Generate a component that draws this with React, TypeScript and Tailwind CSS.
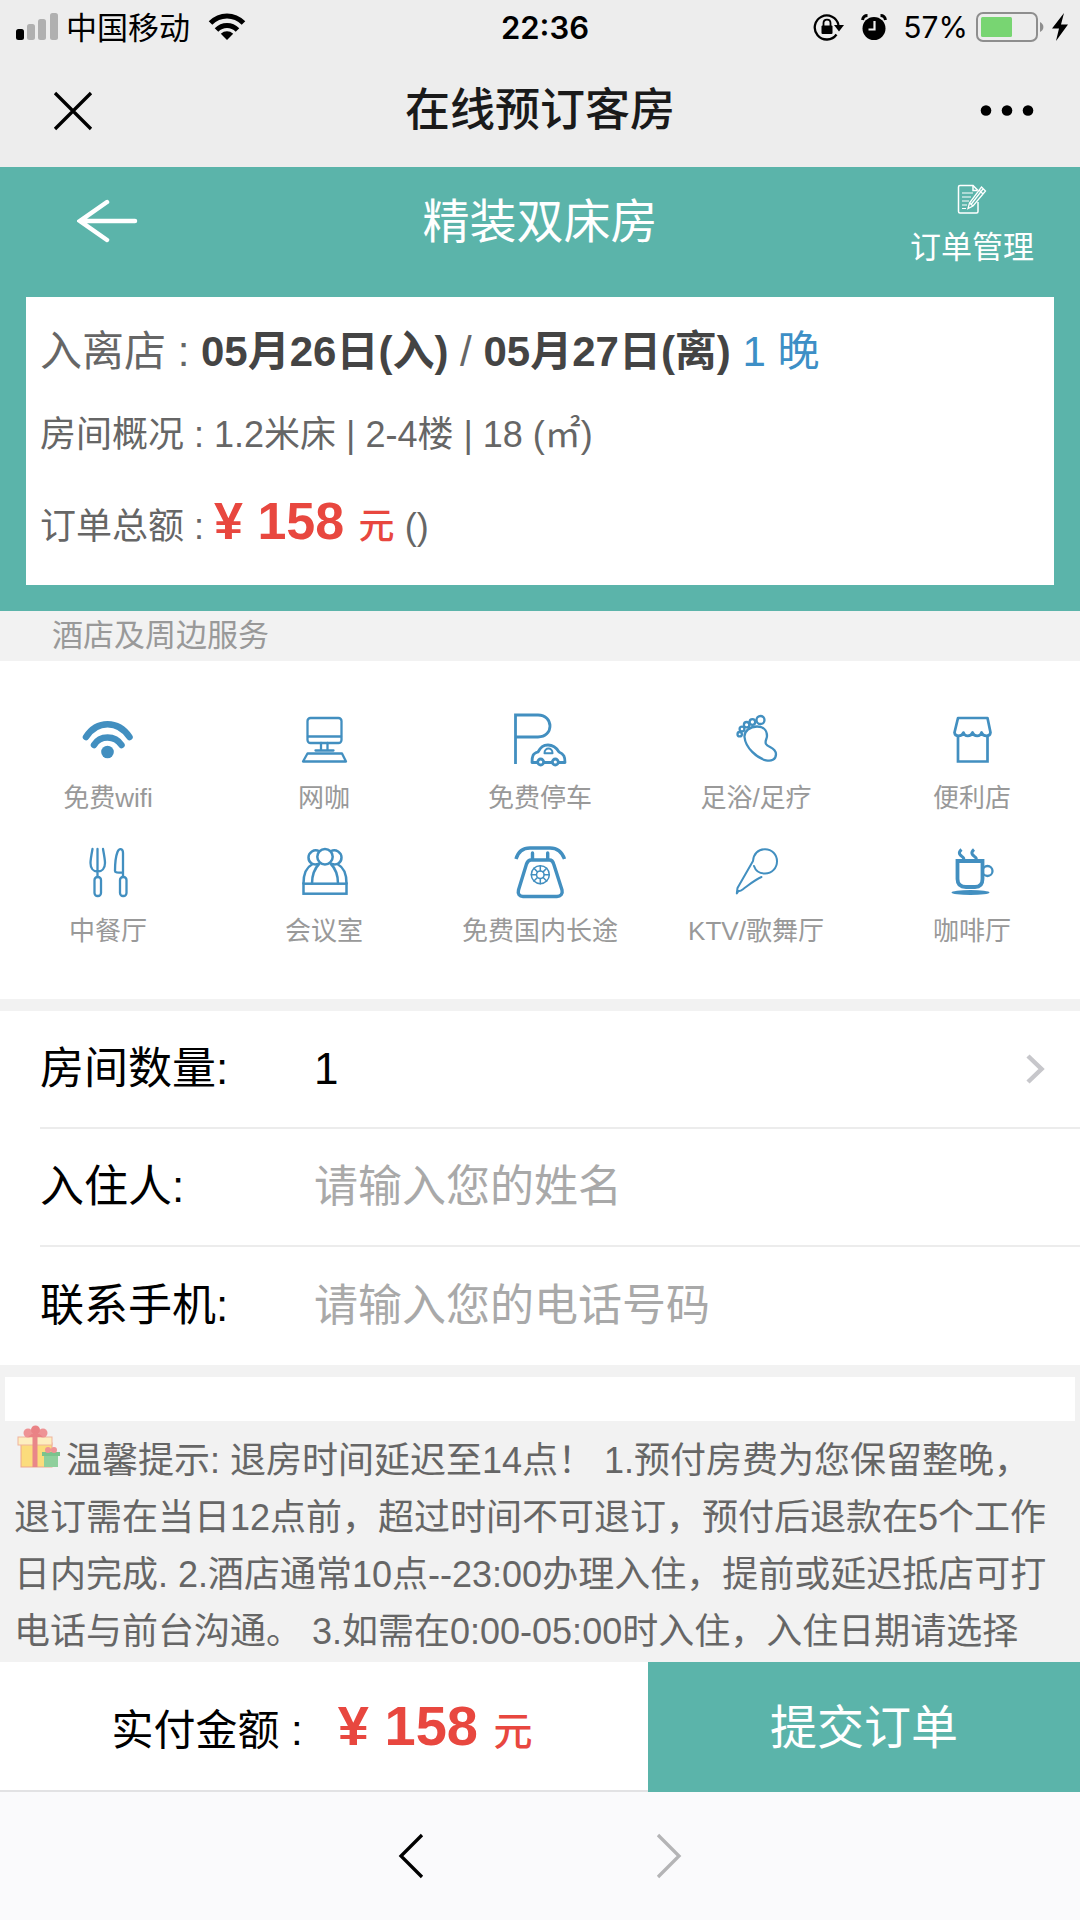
import React from "react";

const rooms = [1, 2, 3, 4, 5];

type IconProps = { children: React.ReactNode; width?: number };

function ServiceIcon({ children, width = 2.3 }: IconProps) {
  return (
    <svg
      viewBox="0 0 60 60"
      className="size-15"
      fill="none"
      stroke="#428fc0"
      strokeWidth={width}
      strokeLinecap="round"
      strokeLinejoin="round"
      aria-hidden="true"
    >
      {children}
    </svg>
  );
}

const dialAngles = [0, 45, 90, 135, 180, 225, 270, 315];

const services = [
  {
    label: "免费wifi",
    icon: (
      <ServiceIcon width={6.5}>
        <path d="M8 28C19 11 40 11 51.5 28" />
        <path d="M16 36C22 26 37 26 43.5 36" />
        <circle cx="29.5" cy="43" r="6.3" fill="#428fc0" stroke="none" />
      </ServiceIcon>
    ),
  },
  {
    label: "网咖",
    icon: (
      <ServiceIcon>
        <rect x="13.500" y="9" width="34" height="25" rx="3" />
        <path d="M14 27.5H47M27 34V41M33.5 34V41M21.5 41.5H39.5" />
        <path d="M13.5 44.5H48L52 52.5H9Z" />
      </ServiceIcon>
    ),
  },
  {
    label: "免费停车",
    icon: (
      <ServiceIcon width={2.8}>
        <path d="M5.5 55V6H28C44 6 44 28 28 28H5.5" strokeLinecap="butt" strokeLinejoin="miter" />
        <path d="M27.5 53.5H22C22 47 23 44 28 43C31 38 33 36 38 36C43 36 46 38 49 43C54 45 55 48 55 53.5H48.5M34 53.5H42" />
        <circle cx="30.7" cy="53" r="3" />
        <circle cx="45.3" cy="53" r="3" />
        <path d="M34.5 44.2C34.5 38 42.5 38 42.5 44.2Z" strokeWidth="2" />
      </ServiceIcon>
    ),
  },
  {
    label: "足浴/足疗",
    icon: (
      <ServiceIcon>
        <path d="M18.5 28C18 22 24 17.5 31 17.5C37 17.5 41 21 41 27C41 30 38.5 32 40 35C42 38.5 49.5 38.5 50 45C50 51 45 52.5 40 51.3C31 49 19.5 39 18.5 28Z" />
        <circle cx="34.5" cy="11" r="4" />
        <circle cx="26.4" cy="13" r="2.8" />
        <circle cx="20.6" cy="15.7" r="2.7" />
        <circle cx="16" cy="20" r="2.4" />
        <circle cx="13.7" cy="25.2" r="2.2" />
      </ServiceIcon>
    ),
  },
  {
    label: "便利店",
    icon: (
      <ServiceIcon width={2.7}>
        <path d="M16 9H45.5L48.5 23.5C48 28 41 28 39.5 23.5C38.5 28 32 28 30.5 23.5C29 28 22.5 28 21.5 23.5C20 28 13 28 12.5 23.5Z" />
        <path d="M16 27V52.5H45.5V27" strokeLinejoin="miter" />
      </ServiceIcon>
    ),
  },
  {
    label: "中餐厅",
    icon: (
      <ServiceIcon>
        <path d="M14.5 7C13 15 12.5 18 12.5 21C12.5 26 15 29.5 19.5 29.5C24 29.5 27 26 27 21C27 18 26.5 15 25 7M19.5 7V35" />
        <rect x="16.5" y="35" width="6.5" height="19" rx="3" />
        <path d="M45 35V11C45 6 41 6 39.5 10C37.5 15 37 20 37 29C37 30.5 39 30.7 45 30.7" />
        <rect x="42" y="35" width="6.5" height="19" rx="3" />
      </ServiceIcon>
    ),
  },
  {
    label: "会议室",
    icon: (
      <ServiceIcon width={2.5}>
        <circle cx="31" cy="14.7" r="7.7" />
        <path d="M25 9C20 6.5 14.5 10.5 14.5 15.5C14.5 20.5 19 23.5 24 22M37 9C42 6.5 47.5 10.5 47.5 15.5C47.5 20.5 43 23.5 38 22" />
        <path d="M9.5 41.5C9.5 33 12 25.5 18 22.5M52.5 41.5C52.5 33 50 25.5 44 22.5M18 41.5C18 33 21 26 25.5 21.5M44 41.5C44 33 41 26 36.5 21.5" />
        <rect x="9.5" y="41.7" width="43" height="10" strokeLinejoin="miter" />
      </ServiceIcon>
    ),
  },
  {
    label: "免费国内长途",
    icon: (
      <ServiceIcon width={3.4}>
        <path d="M6 17C8 10 13 6 20 6H40C47 6 52 10 54.5 17" strokeLinecap="butt" />
        <path d="M22.5 11V17M37.7 11V17" />
        <path d="M21 18H39.5C42 18 43 19.5 43.7 22L52 48C53 52 50.5 54.5 47 54.5H13C9.5 54.5 7.5 52 8.5 48L16.5 22C17.5 19.5 18.5 18 21 18Z" />
        <g strokeWidth="1.5">
          <circle cx="30.3" cy="32.7" r="9" />
          <circle cx="30.3" cy="32.7" r="3.8" />
          {dialAngles.map((a) => (
            <path key={a} d="M30.3 28.7V23.7" transform={`rotate(${a} 30.3 32.7)`} />
          ))}
        </g>
      </ServiceIcon>
    ),
  },
  {
    label: "KTV/歌舞厅",
    icon: (
      <ServiceIcon width={2}>
        <path d="M28 24C29.5 28.5 33.5 31.5 39 31.5C46 31.5 51 26 51 19.3C51 12.5 46 7.2 39 7.2C32 7.2 27.5 12 27 19L11.5 46L10.8 51.5L12.5 49C14 49.5 16 48 17 47.2C24 42 30 37 35.5 35" />
      </ServiceIcon>
    ),
  },
  {
    label: "咖啡厅",
    icon: (
      <ServiceIcon width={3.8}>
        <path d="M19.5 7.5C15.5 11 18 13 20 14.5C21.5 15.5 22 17 21.5 18M32 7.5C28 11 30.5 13 32.5 14.5C34 15.5 34.5 17 34 18" strokeLinecap="butt" strokeWidth="3" />
        <path d="M15.5 19H40.5V37C40.5 42.5 38 45 33 45H24C18 45 15.5 42 15.5 37Z" strokeLinejoin="miter" />
        <circle cx="45.5" cy="29" r="5" strokeWidth="2.3" />
        <ellipse cx="28.5" cy="50.5" rx="19" ry="2.5" fill="#428fc0" stroke="none" />
      </ServiceIcon>
    ),
  },
];

function StatusBar() {
  return (
    <div className="grid h-[54px] grid-cols-3 items-center px-4 font-[Inter,'Noto_Sans_CJK_SC',sans-serif] text-black">
      <div className="flex items-center gap-2 text-[31px] leading-none">
        <svg viewBox="0 0 42 28" className="h-7 w-[42px]" aria-hidden="true">
          <rect x="0" y="16" width="8" height="11" rx="2.5" />
          <rect x="11" y="11" width="8" height="16" rx="2.5" fill="#b0b0b0" />
          <rect x="22" y="6" width="8" height="21" rx="2.5" fill="#b0b0b0" />
          <rect x="34" y="0" width="8" height="27" rx="2.5" fill="#b0b0b0" />
        </svg>
        <span>中国移动</span>
        <svg viewBox="0 0 38 28" className="ml-2.5 h-7 w-[38px]" fill="none" stroke="#000" strokeWidth="5" aria-hidden="true">
          <path d="M2.5 10C12 0.5 26 0.5 35.5 10" />
          <path d="M8.5 17C14.5 11 23.5 11 29.5 17" />
          <path d="M19 27L12.8 20.8C16.5 17.5 21.5 17.5 25.2 20.8Z" fill="#000" stroke="none" />
        </svg>
      </div>
      <div className="pl-2.5 text-center text-[31px] leading-none font-semibold">22:36</div>
      <div className="-mr-1 flex items-center justify-end gap-2 text-[30px] leading-none">
        <svg viewBox="0 0 32 28" className="mr-2 h-7 w-8" aria-hidden="true">
          <path d="M25.5 12A12 12 0 1 0 23.5 21.5" fill="none" stroke="#000" strokeWidth="2.3" />
          <path d="M21 12H31L26 18.5Z" />
          <rect x="8.500" y="12.5" width="11" height="8.500" rx="1" />
          <path d="M10.5 13V10C10.5 5.500 17.5 5.500 17.5 10V13" fill="none" stroke="#000" strokeWidth="1.800" />
        </svg>
        <svg viewBox="0 0 26 28" className="mr-2 h-7 w-[26px]" aria-hidden="true">
          <circle cx="13" cy="15.5" r="11.5" />
          <path d="M1.500 7C2 4 4 2.500 6.500 2.500M24.500 7C24 4 22 2.500 19.500 2.500" stroke="#000" strokeWidth="3" fill="none" />
          <path d="M13.5 8V16.5H7.5" stroke="#ededed" strokeWidth="2.2" fill="none" />
        </svg>
        <span>57%</span>
        <svg viewBox="0 0 68 30" className="h-[30px] w-[68px]" aria-hidden="true">
          <rect x="1" y="1" width="60" height="28" rx="6" fill="none" stroke="#8e8e8e" strokeWidth="2" />
          <rect x="5" y="5" width="31" height="20" rx="1.5" fill="#78d572" />
          <path d="M64 10C68.5 12 68.5 18 64 20Z" fill="#8e8e8e" />
        </svg>
        <svg viewBox="0 0 16 28" className="h-7 w-4" aria-hidden="true">
          <path d="M12 0L0 15.5H7L4 28L16 11.5H9Z" />
        </svg>
      </div>
    </div>
  );
}

function FormRow({ id, label, children, last }: { id: string; label: string; children: React.ReactNode; last?: boolean }) {
  return (
    <div className={last ? "flex h-[118px] items-center" : "flex h-[118px] items-center border-b-2 border-[#ececec]"}>
      <label htmlFor={id} className="w-[274px] shrink-0 text-[44px] leading-none text-black">
        {label}
      </label>
      {children}
    </div>
  );
}

export default function App() {
  return (
    <div className="flex min-h-screen flex-col bg-[#f2f2f2] font-['Liberation_Sans','Noto_Sans_CJK_SC',sans-serif]">
      <header className="bg-[#ededed]">
        <StatusBar />
        <div className="flex h-[113px] items-center justify-between px-[45px]">
          <button type="button" aria-label="关闭" className="w-14 pl-2">
            <svg viewBox="0 0 40 40" className="size-10" stroke="#000" strokeWidth="3.3" aria-hidden="true">
              <path d="M2 2L38 38M38 2L2 38" />
            </svg>
          </button>
          <h1 className="text-[45px] leading-none font-medium text-[#1a1a1a]">在线预订客房</h1>
          <button type="button" aria-label="更多" className="w-14">
            <svg viewBox="0 0 56 12" className="h-3 w-14" aria-hidden="true">
              <circle cx="7" cy="5.500" r="5.3" />
              <circle cx="28" cy="5.500" r="5.3" />
              <circle cx="49" cy="5.500" r="5.3" />
            </svg>
          </button>
        </div>
      </header>

      <section className="bg-[#5bb4aa] px-[26px] pb-[26px]">
        <div className="grid h-[130px] grid-cols-3 items-start text-white">
          <button type="button" aria-label="返回" className="justify-self-start pt-8 pl-[51px]">
            <svg viewBox="0 0 62 44" className="h-11 w-[62px]" fill="none" stroke="#fff" strokeWidth="4.5" strokeLinecap="round" aria-hidden="true">
              <path d="M30 3L3 22L30 41M3 22H58" />
            </svg>
          </button>
          <h2 className="pt-[31px] text-center text-[47px] leading-none whitespace-nowrap">精装双床房</h2>
          <a href="#orders" className="mr-5 flex flex-col items-center gap-[17px] justify-self-end pt-4 text-[31px] leading-none">
            <svg viewBox="0 0 30 32" className="h-8 w-[30px]" fill="none" stroke="#fff" strokeWidth="1.5" aria-hidden="true">
              <path d="M21 19V28.5C21 29.5 20.5 30 19.5 30H3C2 30 1.5 29.5 1.5 28.5V4C1.5 3 2 2.5 3 2.5H16L21 7.5" />
              <path d="M16 2.5V7.5H20" />
              <path d="M5 10H16M5 14H14M5 18H12M5 22H10M5 25.5H9" strokeWidth="1.2" />
              <path d="M24.5 4L28.5 8L16 23L11 25.5L12.5 20ZM12.5 20L16 23M22 7L26 11M26 6L14 21.5" strokeWidth="1.3" />
            </svg>
            <span>订单管理</span>
          </a>
        </div>
        <div className="bg-white px-[14px] pt-[13px] pb-3 text-[36px] text-[#666]">
          <p className="text-[42px] leading-[84px]">
            入离店 : <b className="text-[#444]">05月26日(入)</b> / <b className="text-[#444]">05月27日(离)</b>{" "}
            <span className="text-[#3d8fc6]">1 晚</span>
          </p>
          <p className="leading-[81px]">房间概况 : 1.2米床 | 2-4楼 | 18 (㎡)</p>
          <p className="leading-[92px]">
            订单总额 :{" "}
            <b className="text-[52px] text-[#e8473f]">
              ¥ 158 <span className="text-[36px] font-medium">元</span>
            </b>{" "}
            ()
          </p>
        </div>
      </section>

      <h3 className="px-[52px] text-[31px] leading-[50px] text-[#999]">酒店及周边服务</h3>

      <ul className="grid grid-cols-5 bg-white pt-12 pb-6">
        {services.map((s) => (
          <li key={s.label} className="flex h-[133px] flex-col items-center gap-4 text-[26px] leading-[26px] whitespace-nowrap text-[#999]">
            {s.icon}
            <span>{s.label}</span>
          </li>
        ))}
      </ul>

      <form className="mt-3 bg-white pl-10" id="booking" onSubmit={(e) => e.preventDefault()}>
        <FormRow id="rooms" label="房间数量:">
          <select id="rooms" defaultValue="1" className="min-w-0 flex-1 appearance-none bg-transparent text-[44px] leading-none text-black">
            {rooms.map((n) => (
              <option key={n}>{n}</option>
            ))}
          </select>
          <svg viewBox="0 0 20 32" className="mr-[34px] h-8 w-5" fill="none" stroke="#c7c7cb" strokeWidth="4.5" aria-hidden="true">
            <path d="M2 3L15.5 16L2 29" />
          </svg>
        </FormRow>
        <FormRow id="guest" label="入住人:">
          <input id="guest" placeholder="请输入您的姓名" className="min-w-0 flex-1 bg-transparent text-[44px] text-black placeholder:text-[#a9a9a9]" />
        </FormRow>
        <FormRow id="phone" label="联系手机:" last>
          <input id="phone" type="tel" placeholder="请输入您的电话号码" className="min-w-0 flex-1 bg-transparent text-[44px] text-black placeholder:text-[#a9a9a9]" />
        </FormRow>
      </form>

      <div className="mx-[5px] mt-3 h-11 bg-white" />

      <div className="flex-1 px-[14px] pt-1 text-[36px] leading-[57px] text-[#666]">
        <p>
          <svg viewBox="0 0 48 48" className="mr-1 inline-block size-12 align-baseline" aria-hidden="true">
            <rect x="7" y="18" width="31" height="24" fill="#fbdc7c" stroke="#eda68e" />
            <rect x="4" y="12" width="34" height="8" fill="#fdeec0" stroke="#efb49c" />
            <path d="M18.5 12H23.5V42H18.5Z" fill="#e98789" />
            <circle cx="14" cy="8" r="4.5" fill="#ee9395" />
            <circle cx="29" cy="8" r="4.5" fill="#ee9395" />
            <circle cx="21.5" cy="5" r="4.5" fill="#ea8285" />
            <path d="M14 12L21.5 6L29 12Z" fill="#ea8285" />
            <rect x="30" y="30" width="14" height="12" fill="#8fcf9c" />
            <rect x="28" y="27" width="18" height="4" fill="#7cc38d" />
            <circle cx="34" cy="25" r="3" fill="#ee9395" />
            <circle cx="40" cy="25" r="3" fill="#ee9395" />
          </svg>
          温馨提示: 退房时间延迟至14点！ 1.预付房费为您保留整晚，
          <br />
          退订需在当日12点前，超过时间不可退订，预付后退款在5个工作
          <br />
          日内完成. 2.酒店通常10点--23:00办理入住，提前或延迟抵店可打
          <br />
          电话与前台沟通。 3.如需在0:00-05:00时入住，入住日期请选择
        </p>
      </div>

      <div className="flex h-[130px]">
        <div className="flex w-3/5 items-baseline justify-center border-b-2 border-[#e2e2e4] bg-white pt-8 pr-1 text-[42px] whitespace-pre text-black">
          <span>实付金额 :   </span>
          <b className="text-[56px] leading-[64px] text-[#e8473f]">
            ¥ 158 <span className="text-[39px] font-medium">元</span>
          </b>
        </div>
        <button type="submit" form="booking" className="w-2/5 bg-[#5bb4aa] text-[47px] leading-none text-white">
          提交订单
        </button>
      </div>

      <nav className="flex h-32 items-center justify-center gap-[230px] bg-[#fafafc]">
        <button type="button" aria-label="后退">
          <svg viewBox="0 0 28 48" className="h-12 w-7" fill="none" stroke="#000" strokeWidth="3.3" aria-hidden="true">
            <path d="M25 3L4 24L25 45" />
          </svg>
        </button>
        <button type="button" aria-label="前进">
          <svg viewBox="0 0 28 48" className="h-12 w-7" fill="none" stroke="#b4b4b6" strokeWidth="3.3" aria-hidden="true">
            <path d="M3 3L24 24L3 45" />
          </svg>
        </button>
      </nav>
    </div>
  );
}
